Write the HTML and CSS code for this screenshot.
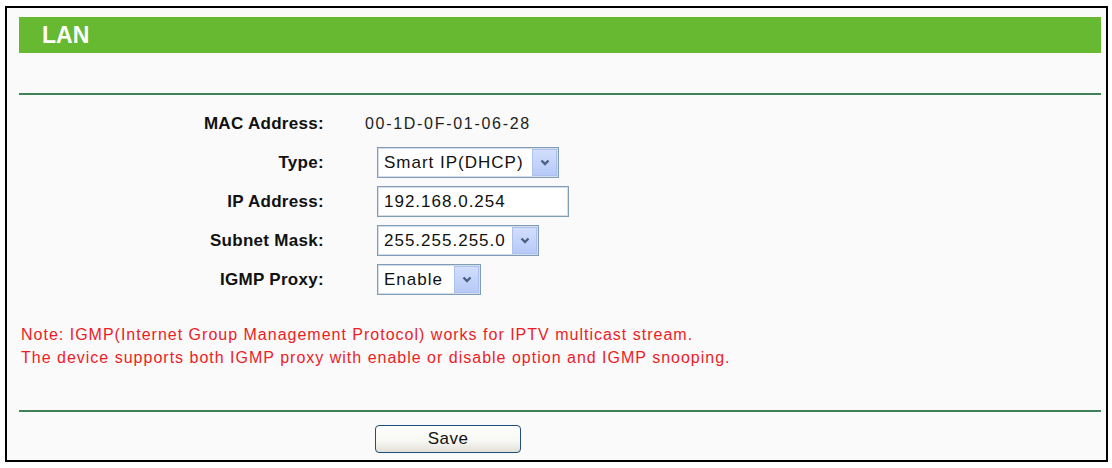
FILE: index.html
```html
<!DOCTYPE html>
<html>
<head>
<meta charset="utf-8">
<title>LAN</title>
<link rel="stylesheet" href="styles.css">
</head>
<body>
<div class="frame">
  <div class="header">LAN</div>
  <div class="rule rule-top"></div>
  <div class="form">
    <div class="label">MAC Address:</div>
    <div class="value">00-1D-0F-01-06-28</div>

    <div class="label">Type:</div>
    <div class="cell">
      <div class="select w-type">
        <select><option>Smart IP(DHCP)</option></select>
        <span class="arrow"><svg width="10" height="7" viewBox="0 0 10 7"><path d="M1.5 1.5 L5 5 L8.5 1.5" fill="none" stroke="#4d6185" stroke-width="2.4"/></svg></span>
      </div>
    </div>

    <div class="label">IP Address:</div>
    <div class="cell">
      <input class="text w-ip" type="text" value="192.168.0.254">
    </div>

    <div class="label">Subnet Mask:</div>
    <div class="cell">
      <div class="select w-mask">
        <select><option>255.255.255.0</option></select>
        <span class="arrow"><svg width="10" height="7" viewBox="0 0 10 7"><path d="M1.5 1.5 L5 5 L8.5 1.5" fill="none" stroke="#4d6185" stroke-width="2.4"/></svg></span>
      </div>
    </div>

    <div class="label">IGMP Proxy:</div>
    <div class="cell">
      <div class="select w-igmp">
        <select><option>Enable</option></select>
        <span class="arrow"><svg width="10" height="7" viewBox="0 0 10 7"><path d="M1.5 1.5 L5 5 L8.5 1.5" fill="none" stroke="#4d6185" stroke-width="2.4"/></svg></span>
      </div>
    </div>
  </div>
  <div class="note">
    <div>Note: IGMP(Internet Group Management Protocol) works for IPTV multicast stream.</div>
    <div>The device supports both IGMP proxy with enable or disable option and IGMP snooping.</div>
  </div>
  <div class="rule rule-bottom"></div>
  <div class="actions">
    <button class="btn" type="button">Save</button>
  </div>
</div>
</body>
</html>
```
FILE: styles.css
```css
html, body {
  margin: 0;
  padding: 0;
  background: #ffffff;
}
body {
  font-family: "Liberation Sans", Arial, sans-serif;
  color: #000;
}
.frame {
  margin: 6px 4px 0 5px;
  border: 2px solid #000;
  background: #fafafa;
  padding: 9px 5px 7px 12px;
}
.header {
  height: 36px;
  background: #66b931;
  color: #fff;
  font-weight: bold;
  font-size: 23px;
  line-height: 36px;
  padding-left: 23px;
}
.rule {
  height: 2px;
  background: #3f8259;
}
.rule-top {
  margin-top: 40px;
}
.form {
  margin-top: 9px;
  display: grid;
  grid-template-columns: 305px 1fr;
  column-gap: 41px;
  grid-auto-rows: 39px;
  align-items: center;
}
.label {
  text-align: right;
  font-weight: bold;
  font-size: 17px;
  letter-spacing: 0.3px;
  color: #111;
}
.value {
  font-size: 16px;
  letter-spacing: 1.7px;
  color: #222;
}
.cell {
  padding-left: 12px;
  display: flex;
  align-items: center;
}
.select {
  position: relative;
  height: 31px;
  box-sizing: border-box;
}
.select select {
  appearance: none;
  -webkit-appearance: none;
  width: 100%;
  height: 31px;
  box-sizing: border-box;
  border: 1px solid #7f9db9;
  box-shadow: inset 0 0 0 1px #d5dde6;
  background: #fff;
  font-family: "Liberation Sans", Arial, sans-serif;
  font-size: 17px;
  letter-spacing: 1px;
  color: #111;
  padding: 0 0 0 6px;
  margin: 0;
  border-radius: 0;
  outline: none;
}
.arrow {
  position: absolute;
  right: 2px;
  top: 2px;
  bottom: 2px;
  width: 25px;
  box-sizing: border-box;
  background: linear-gradient(#d2defd, #b6c9f8);
  border: 1px solid #aec1ee;
  display: flex;
  align-items: center;
  justify-content: center;
  pointer-events: none;
}
.w-type { width: 182px; }
.w-mask { width: 162px; }
.w-igmp { width: 104px; }
.text {
  height: 31px;
  box-sizing: border-box;
  border: 1px solid #7f9db9;
  box-shadow: inset 0 0 0 1px #d5dde6;
  background: #fff;
  font-family: "Liberation Sans", Arial, sans-serif;
  font-size: 17px;
  letter-spacing: 1px;
  color: #111;
  padding: 0 0 0 6px;
  margin: 0;
  outline: none;
}
.w-ip { width: 192px; }
.note {
  margin-top: 24px;
  color: #ee1c25;
  font-size: 16px;
  line-height: 23px;
  letter-spacing: 1px;
  padding-left: 2px;
}
.rule-bottom {
  margin-top: 41px;
}
.actions {
  margin-top: 13px;
  padding-left: 356px;
  display: flex;
}
.btn {
  width: 146px;
  height: 28px;
  border: 1px solid #1d4f80;
  border-radius: 4px;
  background: linear-gradient(#ffffff, #f6f6f2 60%, #e3e0d6);
  font-family: "Liberation Sans", Arial, sans-serif;
  font-size: 17px;
  letter-spacing: 0.5px;
  color: #111;
  padding: 0;
  margin: 0;
}
```
